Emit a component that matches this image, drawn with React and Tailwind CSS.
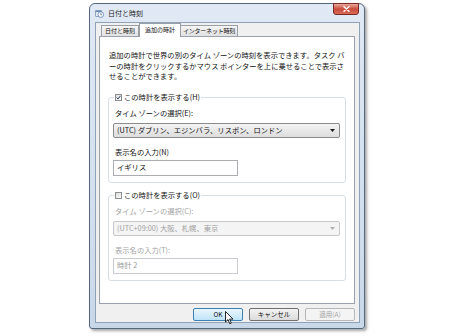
import React from "react";

function TitleIcon() {
  return (
    <svg width="9" height="9" viewBox="0 0 9 9">
      <rect x="0.5" y="1.5" width="6" height="6" rx="0.5" fill="#e8eef6" stroke="#7d93ad" strokeWidth="0.8" />
      <rect x="0.5" y="1.5" width="6" height="1.6" fill="#6f8fb8" />
      <circle cx="5.8" cy="5.6" r="2.8" fill="#f6f9fc" stroke="#5f83b0" strokeWidth="0.8" />
      <path d="M5.8 4.2 V5.7 H7" fill="none" stroke="#2f4f7a" strokeWidth="0.6" />
    </svg>
  );
}

function CloseButton() {
  return (
    <div className="w-[26px] h-[12px] -mt-px rounded-b-[3px] border border-[#7a2a24] bg-gradient-to-b from-[#e9a99d] via-[#c94b3c] to-[#d86b57] flex items-center justify-center">
      <svg width="7" height="6" viewBox="0 0 7 6">
        <path d="M1 0.8 L6 5.2 M6 0.8 L1 5.2" stroke="#ffffff" strokeWidth="1.4" strokeLinecap="round" />
      </svg>
    </div>
  );
}

function Checkbox({ checked, disabled }) {
  return (
    <span className={`w-[7px] h-[7px] border ${disabled ? "border-[#b5b5b5]" : "border-[#8e8f8f]"} bg-gradient-to-br from-[#dcdcdc] to-[#fbfbfb] flex items-center justify-center`}>
      {checked && (
        <svg width="5" height="5" viewBox="0 0 5 5">
          <path d="M0.6 2.6 L2 4 L4.5 0.8" fill="none" stroke="#2a3b55" strokeWidth="1" />
        </svg>
      )}
    </span>
  );
}

function Group({ label, checked, zoneLabel, zone, nameLabel, name, disabled, className }) {
  const dim = disabled ? "text-[#a3a3a3]" : "text-[#111]";
  return (
    <fieldset className={`mx-[8px] border border-[#d5dfe5] rounded-[3px] px-[4px] ${className}`}>
      <legend className="ml-[1px] px-[1px]">
        <span className="flex items-center gap-[2px] h-[11px] text-[7.3px] leading-[11px] text-[#111]">
          <Checkbox checked={checked} />
          <span>{label}</span>
        </span>
      </legend>
      <div className={`mt-[5px] pl-[2px] text-[7.3px] leading-[11px] ${dim}`}>{zoneLabel}</div>
      <div
        className={`mt-[4px] w-[227px] h-[15px] rounded-[2px] border flex items-center justify-between pl-[3px] pr-[4px] text-[7.3px] ${
          disabled
            ? "border-[#c5c9cc] bg-[#f4f4f4] text-[#a3a3a3]"
            : "border-[#8a8a8a] bg-gradient-to-b from-[#f4f4f4] to-[#dddddd] text-[#111]"
        }`}
      >
        <span>{zone}</span>
        <svg width="5" height="3" viewBox="0 0 5 3">
          <path d="M0 0 H5 L2.5 3 Z" fill={disabled ? "#b0b0b0" : "#1a1a1a"} />
        </svg>
      </div>
      <div className={`mt-[9px] pl-[2px] text-[7.3px] leading-[11px] ${dim}`}>{nameLabel}</div>
      <div
        className={`mt-[2px] mb-[6px] w-[125px] h-[16px] border bg-white flex items-center pl-[3px] text-[7.3px] ${
          disabled ? "border-[#c9cdd1] text-[#9a9a9a]" : "border-[#abadb3] text-[#111]"
        }`}
      >
        {name}
      </div>
    </fieldset>
  );
}

function Cursor() {
  return (
    <svg className="absolute left-[225px] top-[311px]" width="9" height="14" viewBox="0 0 9 14">
      <path
        d="M0.5 0.5 V11 L3 8.6 L4.8 12.8 L6.3 12.1 L4.6 8.1 H8 Z"
        fill="#ffffff"
        stroke="#111111"
        strokeWidth="0.9"
        strokeLinejoin="round"
      />
    </svg>
  );
}

export default function App() {
  return (
    <div className="relative w-[470px] h-[336px] overflow-hidden bg-white font-['Noto_Sans_CJK_JP','Liberation_Sans',sans-serif] text-[#111]">
      <div className="ml-[89px] mt-[3px] w-[276px] h-[326px] rounded-t-[6px] rounded-b-[3px] border border-[#55677e] bg-gradient-to-b from-[#e0e9f4] to-[#c9d8e9] shadow-[2px_2px_3px_rgba(0,0,0,0.35)] flex flex-col pl-[5px] pr-[4px] pb-[5px]">
        {/* title bar */}
        <div className="h-[18px] flex items-start justify-between">
          <div className="flex items-center gap-[4px] pt-[4px]">
            <TitleIcon />
            <span className="text-[7px] leading-[10px] text-[#1a1a1a]">日付と時刻</span>
          </div>
          <div className="mr-px">
            <CloseButton />
          </div>
        </div>

        {/* client area */}
        <div className="flex-1 border border-[#8fa2b8] bg-[#f0f0f0] flex flex-col pl-[3px] pr-[4px]">
          {/* tabs */}
          <div className="flex items-end h-[13px] ml-[2px] text-[6px] leading-none whitespace-nowrap">
            <div className="w-[38px] h-[11px] border border-b-0 border-[#9a9fa6] bg-gradient-to-b from-[#f5f5f5] to-[#e2e2e2] flex items-center justify-center">
              日付と時刻
            </div>
            <div className="relative z-10 w-[42px] h-[14px] -mb-px border border-b-0 border-[#9a9fa6] bg-white flex items-center justify-center pb-[1px]">
              追加の時計
            </div>
            <div className="w-[57px] h-[11px] border border-b-0 border-l-0 border-[#9a9fa6] bg-gradient-to-b from-[#f5f5f5] to-[#e2e2e2] flex items-center justify-center tracking-[-0.2px]">
              インターネット時刻
            </div>
          </div>

          {/* panel */}
          <div className="w-[256px] h-[268px] border border-[#9aa3ad] bg-white flex flex-col">
            <p className="pl-[9px] pt-[13px] text-[7.3px] leading-[10.5px] whitespace-nowrap">
              追加の時計で世界の別のタイム ゾーンの時刻を表示できます。タスク バ
              <br />
              ーの時計をクリックするかマウス ポインターを上に乗せることで表示さ
              <br />
              せることができます。
            </p>
            <Group
              className="mt-[10px]"
              label="この時計を表示する(H)"
              checked
              zoneLabel="タイム ゾーンの選択(E):"
              zone="(UTC) ダブリン、エジンバラ、リスボン、ロンドン"
              nameLabel="表示名の入力(N)"
              name="イギリス"
            />
            <Group
              className="mt-[7px]"
              label="この時計を表示する(O)"
              disabled
              zoneLabel="タイム ゾーンの選択(C):"
              zone="(UTC+09:00) 大阪、札幌、東京"
              nameLabel="表示名の入力(T):"
              name="時計 2"
            />
          </div>

          {/* buttons */}
          <div className="mt-[4px] w-[256px] flex justify-end gap-[6px] text-[6.5px]">
            <div className="w-[50px] h-[13px] rounded-[2px] border border-[#3c7fb1] bg-gradient-to-b from-[#eaf6fd] to-[#bfe4f8] flex items-center justify-center">
              OK
            </div>
            <div className="w-[50px] h-[13px] rounded-[2px] border border-[#707070] bg-gradient-to-b from-[#f3f3f3] to-[#dcdcdc] flex items-center justify-center">
              キャンセル
            </div>
            <div className="w-[50px] h-[13px] rounded-[2px] border border-[#b5b8bb] bg-[#f4f4f4] text-[#a3a3a3] flex items-center justify-center">
              適用(A)
            </div>
          </div>
        </div>
      </div>
      <Cursor />
    </div>
  );
}
